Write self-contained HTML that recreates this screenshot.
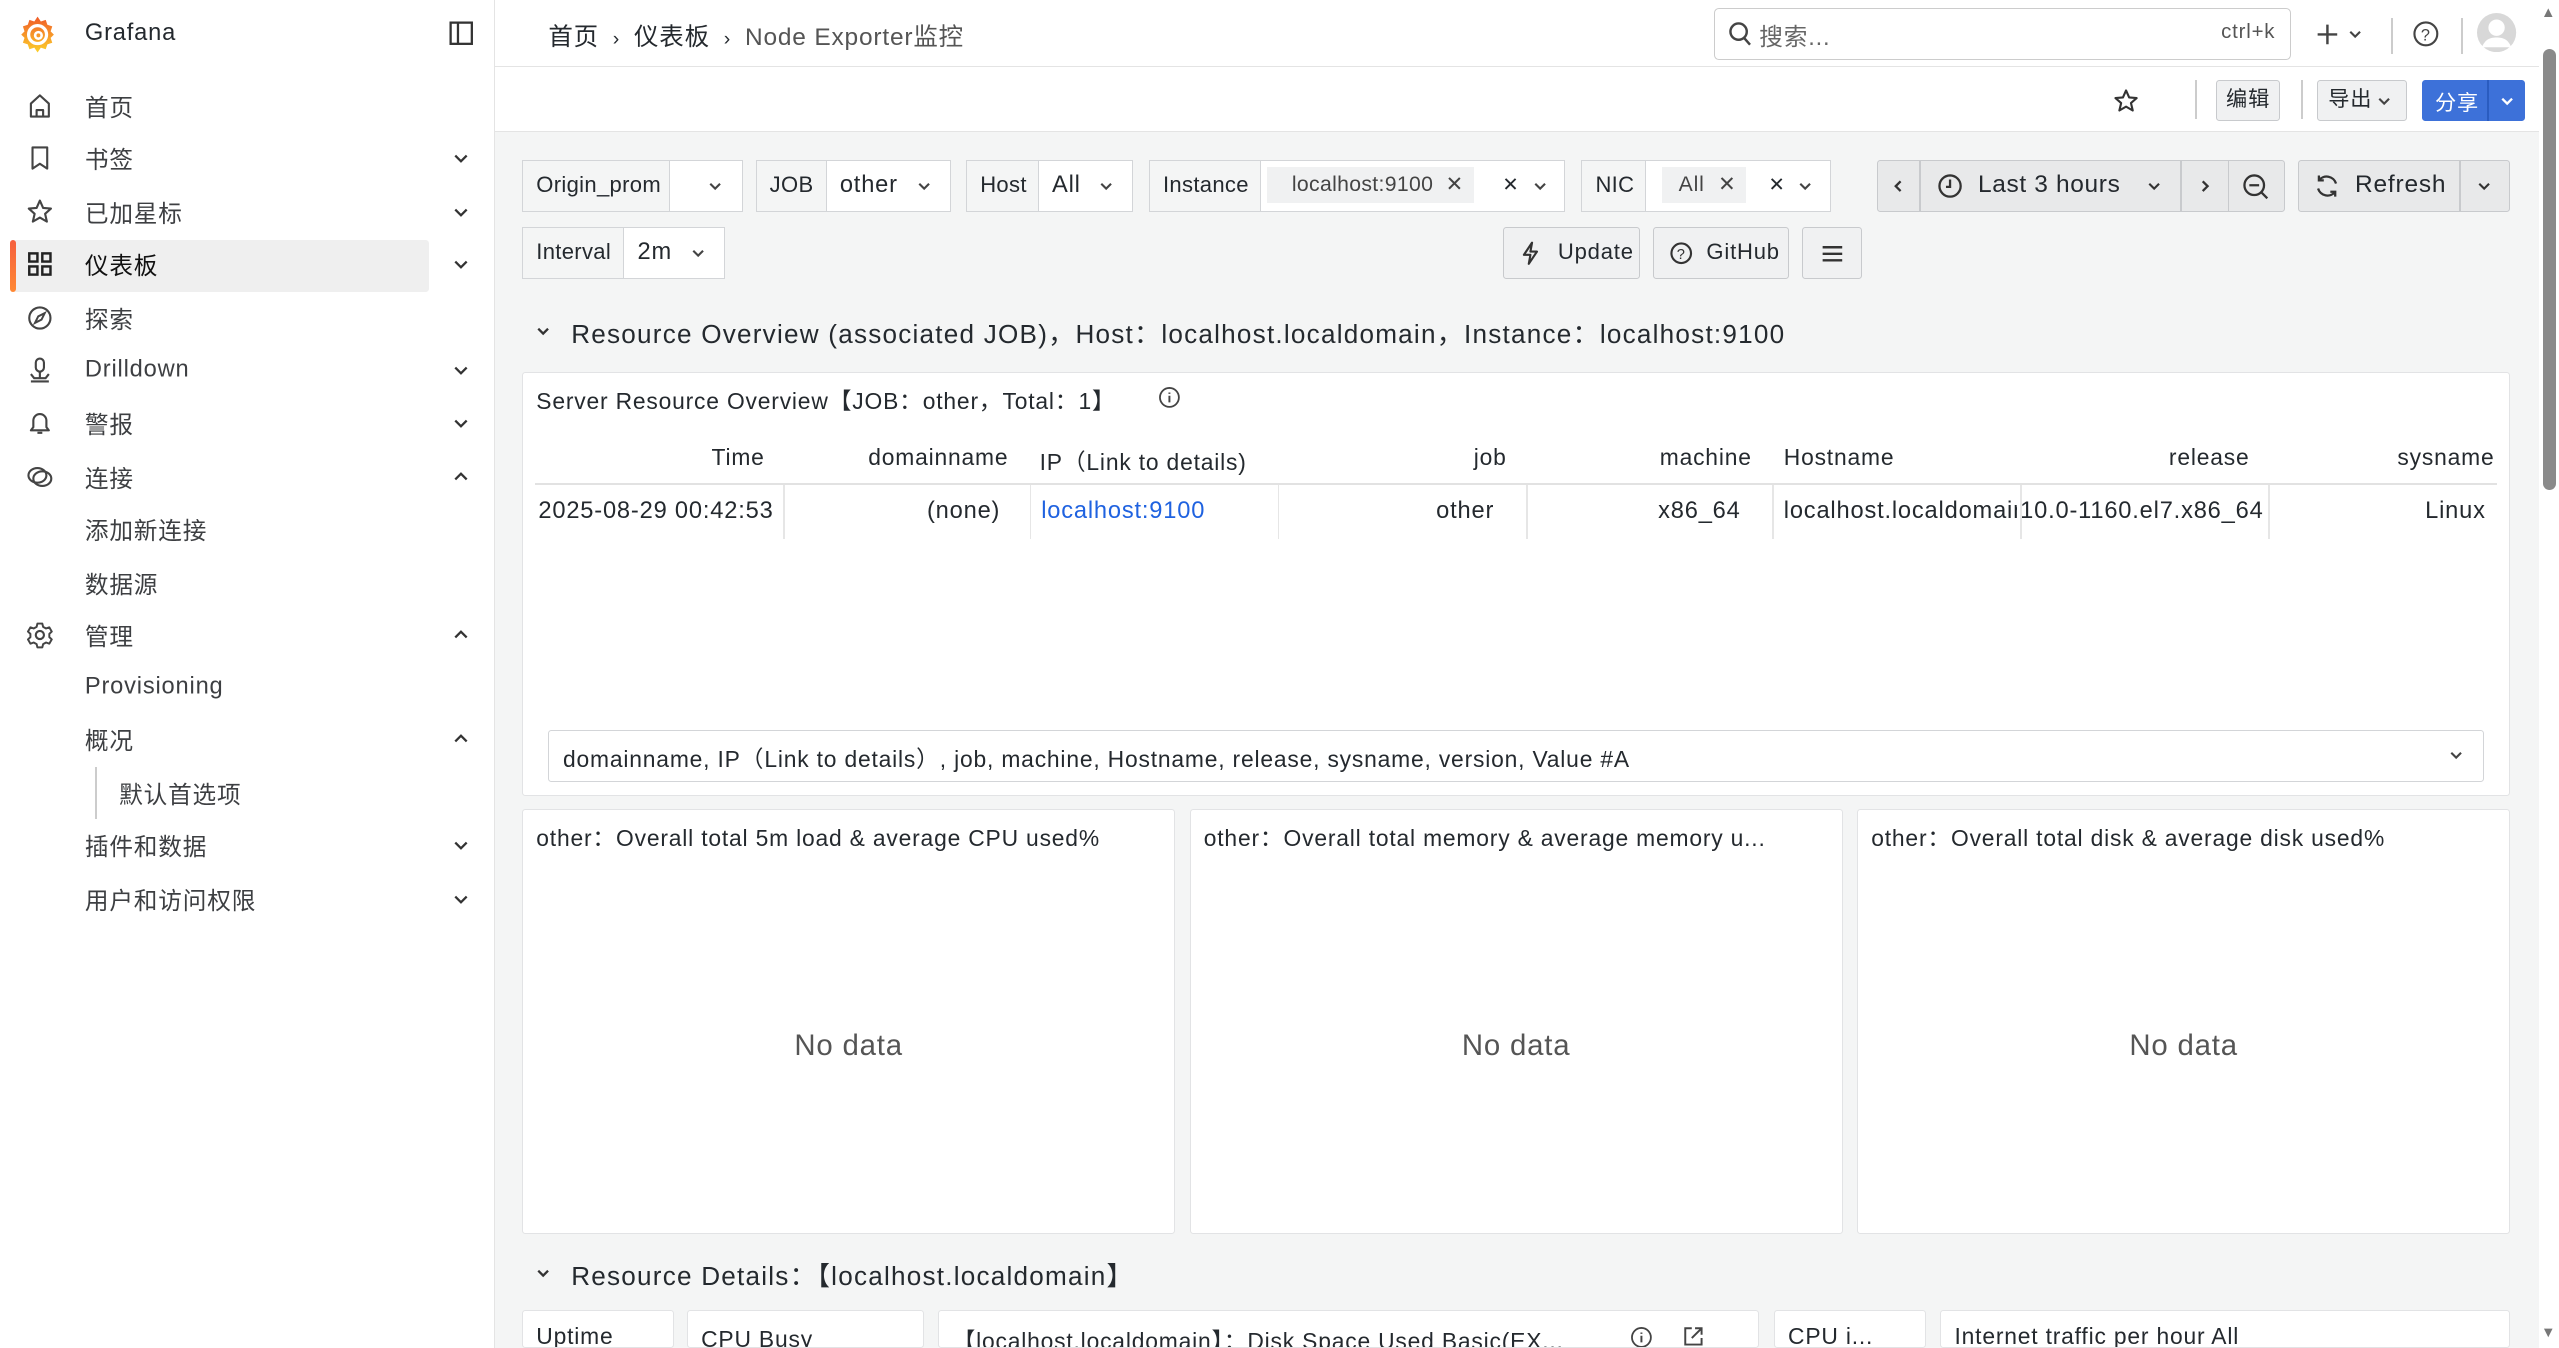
<!DOCTYPE html>
<html><head><meta charset="utf-8"><style>
html{margin:0;padding:0;background:#f4f5f5;overflow:hidden;}
body{margin:0;padding:0;width:1568px;height:826px;zoom:1.632;position:relative;overflow:hidden;background:#f4f5f5;font-family:"Liberation Sans","Noto Sans CJK SC",sans-serif;color:#24292e;font-size:14px;letter-spacing:0.5px;}
.a{position:absolute;white-space:nowrap;}
.box{position:absolute;box-sizing:border-box;}
.side{position:absolute;left:0;top:0;width:303px;height:826px;background:#fff;border-right:1px solid #e4e4e4;}
.nav{position:absolute;left:52px;font-size:14.5px;color:#3d3f42;transform:translateY(-50%);}
.ico{position:absolute;left:16px;width:17px;height:17px;transform:translateY(-50%);}
.chev{position:absolute;left:277px;width:11px;height:11px;transform:translateY(-50%);}
.lbl{position:absolute;box-sizing:border-box;height:32px;border:1px solid #d3d5d8;background:#f4f5f5;font-size:13.5px;line-height:30px;padding-left:8px;letter-spacing:0.2px;}
.inp{position:absolute;box-sizing:border-box;height:32px;border:1px solid #d3d5d8;background:#fff;font-size:14.5px;line-height:30px;padding-left:8px;}
.btn{position:absolute;box-sizing:border-box;height:32px;border:1px solid #c8cacd;background:#f0f1f2;font-size:13.5px;line-height:30px;border-radius:2px;}
.panel{position:absolute;box-sizing:border-box;background:#fff;border:1px solid #e2e3e5;border-radius:2px;overflow:hidden;}
.pt{position:absolute;left:8px;top:7px;font-size:14px;white-space:nowrap;}
.nd{position:absolute;left:0;right:0;top:134px;text-align:center;font-size:18px;color:#555;}
.th{position:absolute;top:272px;font-size:14px;white-space:nowrap;}
.td{position:absolute;top:305px;font-size:14.5px;white-space:nowrap;}
.clip{position:absolute;top:305px;height:20px;overflow:hidden;}
.clip span{position:absolute;right:0;top:0;font-size:14.5px;white-space:nowrap;}
.vl{position:absolute;top:297px;width:1px;height:33px;background:#e6e6e6;}
.dn{position:absolute;width:10px;height:10px;}
</style></head><body>

<div class="box" style="left:0;top:0;width:1556px;height:41px;background:#fff;border-bottom:1px solid #e4e4e4;"></div>
<div class="box" style="left:303px;top:41px;width:1253px;height:40px;background:#fff;border-bottom:1px solid #e4e4e4;"></div>
<div class="side"></div>

<svg class="a" style="left:11px;top:9px" width="24" height="24" viewBox="0 0 24 24"><defs><linearGradient id="g" x1="0" y1="1" x2="0" y2="0"><stop offset="0" stop-color="#fcd12a"/><stop offset="1" stop-color="#f05a28"/></linearGradient></defs><path d="M12 1l2 3 3-1 1 3 3 1-1 3 2 2-2 2 1 3-3 1-1 3-3-1-2 3-2-3-3 1-1-3-3-1 1-3-2-2 2-2-1-3 3-1 1-3 3 1z" fill="url(#g)"/><circle cx="12" cy="12" r="5.5" fill="none" stroke="#fff" stroke-width="2"/><circle cx="12.5" cy="12.5" r="2" fill="none" stroke="#fff" stroke-width="1.6"/></svg>
<div class="a" style="left:52px;top:12px;font-size:14.5px;">Grafana</div>
<svg class="a" style="left:275px;top:13px" width="15" height="15" viewBox="0 0 15 15"><rect x="1" y="1" width="13" height="13" fill="none" stroke="#333" stroke-width="1.4"/><line x1="5.5" y1="1" x2="5.5" y2="14" stroke="#333" stroke-width="1.4"/></svg>

<div class="a" style="left:336px;top:11px;font-size:15px;">首页 <span style="font-size:12px">&nbsp;›&nbsp;</span> 仪表板 <span style="font-size:12px">&nbsp;›&nbsp;</span> <span style="color:#555">Node Exporter监控</span></div>

<div class="box" style="left:1050px;top:5px;width:354px;height:32px;border:1px solid #ccc;border-radius:3px;background:#fff;"></div>
<svg class="a" style="left:1059px;top:13px" width="15" height="16" viewBox="0 0 15 16"><circle cx="6.5" cy="6.5" r="5" fill="none" stroke="#444" stroke-width="1.5"/><line x1="10" y1="10.5" x2="13.5" y2="14.5" stroke="#444" stroke-width="1.5"/></svg>
<div class="a" style="left:1078px;top:11px;font-size:14.5px;color:#666;">搜索...</div>
<div class="a" style="left:1361px;top:13px;font-size:12.5px;color:#555;">ctrl+k</div>
<svg class="a" style="left:1419px;top:14px" width="14" height="14" viewBox="0 0 14 14"><path d="M7 1v12M1 7h12" stroke="#444" stroke-width="1.5"/></svg>
<svg class="dn" style="left:1438px;top:16px" viewBox="0 0 10 10"><path d="M2 3.5l3 3 3-3" fill="none" stroke="#444" stroke-width="1.3"/></svg>
<div class="box" style="left:1465px;top:11px;width:1px;height:22px;background:#ccc;"></div>
<svg class="a" style="left:1478px;top:12px" width="17" height="17" viewBox="0 0 17 17"><circle cx="8.5" cy="8.5" r="7" fill="none" stroke="#444" stroke-width="1.3"/><text x="8.5" y="12.5" text-anchor="middle" font-size="10" font-family="Liberation Sans" fill="#444">?</text></svg>
<div class="box" style="left:1508px;top:11px;width:1px;height:22px;background:#ccc;"></div>
<svg class="a" style="left:1518px;top:8px" width="24" height="24" viewBox="0 0 24 24"><circle cx="12" cy="12" r="12" fill="#d8d8d8"/><circle cx="12" cy="9" r="5" fill="#fff"/><path d="M3 21c2-5 5-6 9-6s7 1 9 6" fill="#fff"/></svg>
<div class="box" style="left:1556px;top:0;width:12px;height:826px;background:#fff;"></div>
<div class="box" style="left:1558px;top:30px;width:8px;height:270px;background:#8a8a8a;border-radius:4px;"></div>
<div class="a" style="left:1557px;top:3px;font-size:9px;color:#777;">▲</div>
<div class="a" style="left:1557px;top:812px;font-size:9px;color:#777;">▼</div>

<svg class="a" style="left:1295px;top:54px" width="16" height="16" viewBox="0 0 16 16"><path d="M8 1.5l1.9 4.3 4.6.4-3.5 3 1.1 4.6L8 11.4l-4.1 2.4 1.1-4.6-3.5-3 4.6-.4z" fill="none" stroke="#333" stroke-width="1.3" stroke-linejoin="round"/></svg>
<div class="box" style="left:1345px;top:49px;width:1px;height:24px;background:#ccc;"></div>
<div class="btn" style="left:1358px;top:49px;width:39px;height:25px;line-height:23px;text-align:center;font-size:13px;">编辑</div>
<div class="box" style="left:1410px;top:49px;width:1px;height:24px;background:#ccc;"></div>
<div class="btn" style="left:1420px;top:49px;width:55px;height:25px;line-height:23px;padding-left:6px;font-size:13px;">导出</div>
<svg class="dn" style="left:1456px;top:57px" viewBox="0 0 10 10"><path d="M2 3.5l3 3 3-3" fill="none" stroke="#444" stroke-width="1.3"/></svg>
<div class="box" style="left:1484px;top:49px;width:63px;height:25px;background:#3d71d9;border-radius:2px;"></div>
<div class="a" style="left:1492px;top:53px;font-size:13px;color:#fff;">分享</div>
<div class="box" style="left:1524px;top:49px;width:1px;height:25px;background:#2a5cc0;"></div>
<svg class="dn" style="left:1531px;top:57px" viewBox="0 0 10 10"><path d="M2 3.5l3 3 3-3" fill="none" stroke="#fff" stroke-width="1.4"/></svg>

<!-- sidebar -->
<svg class="ico" style="top:65px" viewBox="0 0 17 17"><path d="M3 15V7l5.5-5L14 7v8z M6.5 15v-4h4v4" fill="none" stroke="#444" stroke-width="1.3" stroke-linejoin="round"/></svg>
<div class="nav" style="top:65px">首页</div>
<svg class="ico" style="top:97px" viewBox="0 0 17 17"><path d="M4 2h9v13l-4.5-3L4 15z" fill="none" stroke="#444" stroke-width="1.3" stroke-linejoin="round"/></svg>
<div class="nav" style="top:97px">书签</div>
<svg class="ico" style="top:130px" viewBox="0 0 17 17"><path d="M8.5 1.5l2 4.5 4.8.4-3.6 3.2 1.1 4.8-4.3-2.5-4.3 2.5 1.1-4.8-3.6-3.2 4.8-.4z" fill="none" stroke="#444" stroke-width="1.3" stroke-linejoin="round"/></svg>
<div class="nav" style="top:130px">已加星标</div>
<div class="box" style="left:8px;top:147px;width:255px;height:32px;background:#efefef;border-radius:2px;"></div>
<div class="box" style="left:6px;top:147px;width:4px;height:32px;background:linear-gradient(#f55f3e,#ff8833);border-radius:2px;"></div>
<svg class="ico" style="top:162px" viewBox="0 0 17 17"><g fill="none" stroke="#222" stroke-width="1.5"><rect x="2" y="2" width="5" height="5"/><rect x="10" y="2" width="5" height="5"/><rect x="2" y="10" width="5" height="5"/><rect x="10" y="10" width="5" height="5"/></g></svg>
<div class="nav" style="top:162px;color:#111">仪表板</div>
<svg class="ico" style="top:195px" viewBox="0 0 17 17"><circle cx="8.5" cy="8.5" r="6.5" fill="none" stroke="#444" stroke-width="1.3"/><path d="M11.5 5.5l-2 4-4 2 2-4z" fill="none" stroke="#444" stroke-width="1.2"/></svg>
<div class="nav" style="top:195px">探索</div>
<svg class="ico" style="top:227px" viewBox="0 0 17 17"><g fill="none" stroke="#444" stroke-width="1.3"><rect x="6" y="1.5" width="5" height="8" rx="2.5"/><path d="M8.5 9.5v4M3 11l2 2.5h7l2-2.5M3 15.5h11"/></g></svg>
<div class="nav" style="top:227px">Drilldown</div>
<svg class="ico" style="top:259px" viewBox="0 0 17 17"><path d="M3 13h11l-1.5-2V7a4 4 0 0 0-8 0v4z M7 14.5h3" fill="none" stroke="#444" stroke-width="1.3" stroke-linejoin="round"/></svg>
<div class="nav" style="top:259px">警报</div>
<svg class="ico" style="top:292px" viewBox="0 0 17 17"><g fill="none" stroke="#444" stroke-width="1.3"><ellipse cx="7" cy="7.5" rx="5.5" ry="4.5"/><ellipse cx="10" cy="9.5" rx="5.5" ry="4.5"/></g></svg>
<div class="nav" style="top:292px">连接</div>
<div class="nav" style="top:324px">添加新连接</div>
<div class="nav" style="top:357px">数据源</div>
<svg class="ico" style="top:389px" viewBox="0 0 17 17"><circle cx="8.5" cy="8.5" r="2.5" fill="none" stroke="#444" stroke-width="1.3"/><path d="M7 1.5h3l.5 2 1.8 1 2-.7 1.5 2.6-1.5 1.4v2l1.5 1.4-1.5 2.6-2-.7-1.8 1-.5 2H7l-.5-2-1.8-1-2 .7-1.5-2.6 1.5-1.4v-2L1.2 6.4l1.5-2.6 2 .7 1.8-1z" fill="none" stroke="#444" stroke-width="1.2" stroke-linejoin="round"/></svg>
<div class="nav" style="top:389px">管理</div>
<div class="nav" style="top:421px">Provisioning</div>
<div class="nav" style="top:453px">概况</div>
<div class="box" style="left:58px;top:470px;width:1.5px;height:32px;background:#ccc;"></div>
<div class="nav" style="top:486px;left:73px">默认首选项</div>
<div class="nav" style="top:518px">插件和数据</div>
<div class="nav" style="top:551px">用户和访问权限</div>
<svg class="chev" style="top:97px" viewBox="0 0 11 11"><path d="M2 4l3.5 3.5L9 4" fill="none" stroke="#333" stroke-width="1.4"/></svg>
<svg class="chev" style="top:130px" viewBox="0 0 11 11"><path d="M2 4l3.5 3.5L9 4" fill="none" stroke="#333" stroke-width="1.4"/></svg>
<svg class="chev" style="top:162px" viewBox="0 0 11 11"><path d="M2 4l3.5 3.5L9 4" fill="none" stroke="#333" stroke-width="1.4"/></svg>
<svg class="chev" style="top:227px" viewBox="0 0 11 11"><path d="M2 4l3.5 3.5L9 4" fill="none" stroke="#333" stroke-width="1.4"/></svg>
<svg class="chev" style="top:259px" viewBox="0 0 11 11"><path d="M2 4l3.5 3.5L9 4" fill="none" stroke="#333" stroke-width="1.4"/></svg>
<svg class="chev" style="top:292px" viewBox="0 0 11 11"><path d="M2 7l3.5-3.5L9 7" fill="none" stroke="#333" stroke-width="1.4"/></svg>
<svg class="chev" style="top:389px" viewBox="0 0 11 11"><path d="M2 7l3.5-3.5L9 7" fill="none" stroke="#333" stroke-width="1.4"/></svg>
<svg class="chev" style="top:453px" viewBox="0 0 11 11"><path d="M2 7l3.5-3.5L9 7" fill="none" stroke="#333" stroke-width="1.4"/></svg>
<svg class="chev" style="top:518px" viewBox="0 0 11 11"><path d="M2 4l3.5 3.5L9 4" fill="none" stroke="#333" stroke-width="1.4"/></svg>
<svg class="chev" style="top:551px" viewBox="0 0 11 11"><path d="M2 4l3.5 3.5L9 4" fill="none" stroke="#333" stroke-width="1.4"/></svg>

<!-- variables -->
<div class="lbl" style="left:320px;top:98px;width:91px;">Origin_prom</div>
<div class="inp" style="left:410px;top:98px;width:45px;"></div>
<svg class="dn" style="left:433px;top:109px" viewBox="0 0 10 10"><path d="M2 3.5l3 3 3-3" fill="none" stroke="#444" stroke-width="1.3"/></svg>
<div class="lbl" style="left:463px;top:98px;width:44px;">JOB</div>
<div class="inp" style="left:506px;top:98px;width:77px;">other</div>
<svg class="dn" style="left:561px;top:109px" viewBox="0 0 10 10"><path d="M2 3.5l3 3 3-3" fill="none" stroke="#444" stroke-width="1.3"/></svg>
<div class="lbl" style="left:592px;top:98px;width:45px;">Host</div>
<div class="inp" style="left:636px;top:98px;width:58px;">All</div>
<svg class="dn" style="left:673px;top:109px" viewBox="0 0 10 10"><path d="M2 3.5l3 3 3-3" fill="none" stroke="#444" stroke-width="1.3"/></svg>
<div class="lbl" style="left:704px;top:98px;width:69px;">Instance</div>
<div class="inp" style="left:772px;top:98px;width:187px;"><span class="a" style="left:4px;top:4px;height:22px;line-height:22px;background:#f0f1f2;padding:0 6px 0 15px;font-size:13px;color:#444;letter-spacing:0.2px">localhost:9100 &nbsp;✕</span><span class="a" style="left:148px;top:0;font-size:12px">✕</span></div>
<svg class="dn" style="left:939px;top:109px" viewBox="0 0 10 10"><path d="M2 3.5l3 3 3-3" fill="none" stroke="#444" stroke-width="1.3"/></svg>
<div class="lbl" style="left:969px;top:98px;width:40px;">NIC</div>
<div class="inp" style="left:1008px;top:98px;width:114px;"><span class="a" style="left:10px;top:4px;height:22px;line-height:22px;background:#f0f1f2;padding:0 6px 0 10px;font-size:13px;color:#444">All &nbsp;✕</span><span class="a" style="left:75px;top:0;font-size:12px">✕</span></div>
<svg class="dn" style="left:1101px;top:109px" viewBox="0 0 10 10"><path d="M2 3.5l3 3 3-3" fill="none" stroke="#444" stroke-width="1.3"/></svg>

<div class="btn" style="left:1150px;top:98px;width:250px;background:#e8e9ea;"></div>
<div class="box" style="left:1176px;top:98px;width:1px;height:32px;background:#c8cacd;"></div>
<div class="box" style="left:1336px;top:98px;width:1px;height:32px;background:#c8cacd;"></div>
<div class="box" style="left:1365px;top:98px;width:1px;height:32px;background:#c8cacd;"></div>
<svg class="dn" style="left:1158px;top:109px" viewBox="0 0 10 10"><path d="M6.5 2l-3 3 3 3" fill="none" stroke="#333" stroke-width="1.4"/></svg>
<svg class="a" style="left:1187px;top:106px" width="16" height="16" viewBox="0 0 16 16"><circle cx="8" cy="8" r="6.5" fill="none" stroke="#333" stroke-width="1.4"/><path d="M8 4v4.5H5.5" fill="none" stroke="#333" stroke-width="1.4"/></svg>
<div class="a" style="left:1212px;top:105px;font-size:15px;letter-spacing:0.4px">Last 3 hours</div>
<svg class="dn" style="left:1315px;top:109px" viewBox="0 0 10 10"><path d="M2 3.5l3 3 3-3" fill="none" stroke="#333" stroke-width="1.3"/></svg>
<svg class="dn" style="left:1346px;top:109px" viewBox="0 0 10 10"><path d="M3.5 2l3 3-3 3" fill="none" stroke="#333" stroke-width="1.4"/></svg>
<svg class="a" style="left:1374px;top:106px" width="17" height="17" viewBox="0 0 17 17"><circle cx="7.5" cy="7.5" r="6" fill="none" stroke="#333" stroke-width="1.4"/><path d="M4.5 7.5h6M12 12l3.5 3.5" stroke="#333" stroke-width="1.4"/></svg>
<div class="btn" style="left:1408px;top:98px;width:130px;background:#e8e9ea;"></div>
<div class="box" style="left:1507px;top:98px;width:1px;height:32px;background:#c8cacd;"></div>
<svg class="a" style="left:1418px;top:106px" width="16" height="16" viewBox="0 0 16 16"><path d="M13.5 6.5A6 6 0 0 0 3 4.5M2.5 9.5A6 6 0 0 0 13 11.5" fill="none" stroke="#333" stroke-width="1.4"/><path d="M3 1.5v3h3M13 14.5v-3h-3" fill="none" stroke="#333" stroke-width="1.4"/></svg>
<div class="a" style="left:1443px;top:105px;font-size:15px;">Refresh</div>
<svg class="dn" style="left:1517px;top:109px" viewBox="0 0 10 10"><path d="M2 3.5l3 3 3-3" fill="none" stroke="#333" stroke-width="1.3"/></svg>

<div class="lbl" style="left:320px;top:139px;width:63px;">Interval</div>
<div class="inp" style="left:382px;top:139px;width:62px;">2m</div>
<svg class="dn" style="left:423px;top:150px" viewBox="0 0 10 10"><path d="M2 3.5l3 3 3-3" fill="none" stroke="#444" stroke-width="1.3"/></svg>
<div class="btn" style="left:921px;top:139px;width:84px;"><svg class="a" style="left:9px;top:8px" width="14" height="15" viewBox="0 0 14 15"><path d="M8 1L3 8.5h4L6 14l5-7.5H7z" fill="none" stroke="#333" stroke-width="1.3" stroke-linejoin="round"/></svg><span class="a" style="left:33px;top:0">Update</span></div>
<div class="btn" style="left:1013px;top:139px;width:83px;"><svg class="a" style="left:9px;top:8px" width="15" height="15" viewBox="0 0 15 15"><circle cx="7.5" cy="7.5" r="6" fill="none" stroke="#333" stroke-width="1.3"/><text x="7.5" y="11" text-anchor="middle" font-size="9" font-family="Liberation Sans" fill="#333">?</text></svg><span class="a" style="left:32px;top:0">GitHub</span></div>
<div class="btn" style="left:1104px;top:139px;width:37px;"><svg class="a" style="left:11px;top:10px" width="14" height="12" viewBox="0 0 14 12"><path d="M1 2h12M1 6h12M1 10h12" stroke="#333" stroke-width="1.5"/></svg></div>

<!-- section 1 -->
<svg class="dn" style="left:328px;top:198px" viewBox="0 0 10 10"><path d="M2 3.5l3 3 3-3" fill="none" stroke="#333" stroke-width="1.4"/></svg>
<div class="a" style="left:350px;top:192px;font-size:16px;letter-spacing:0.75px;">Resource Overview (associated JOB)，Host：localhost.localdomain，Instance：localhost:9100</div>

<div class="panel" style="left:320px;top:228px;width:1218px;height:260px;">
<div class="pt" style="top:6px;">Server Resource Overview【JOB：other，Total：1】</div>
<svg class="a" style="left:389px;top:8px" width="14" height="14" viewBox="0 0 14 14"><circle cx="7" cy="7" r="5.8" fill="none" stroke="#444" stroke-width="1.1"/><path d="M7 6v4M7 4v.8" stroke="#444" stroke-width="1.2"/></svg>
</div>
<div class="th" style="left:436px;">Time</div>
<div class="th" style="left:532px;">domainname</div>
<div class="th" style="left:637px;">IP（Link to details)</div>
<div class="th" style="left:903px;">job</div>
<div class="th" style="left:1017px;">machine</div>
<div class="th" style="left:1093px;">Hostname</div>
<div class="th" style="left:1329px;">release</div>
<div class="th" style="left:1469px;">sysname</div>
<div class="box" style="left:328px;top:296px;width:1202px;height:1px;background:#e2e2e2;"></div>
<div class="clip" style="left:328px;width:146px;"><span>2025-08-29 00:42:53</span></div>
<div class="td" style="left:568px;">(none)</div>
<div class="td" style="left:638px;color:#1f62e0;">localhost:9100</div>
<div class="td" style="left:880px;">other</div>
<div class="td" style="left:1016px;">x86_64</div>
<div class="td" style="left:1093px;width:143px;overflow:hidden;">localhost.localdomain</div>
<div class="clip" style="left:1239px;width:148px;background:#fff;"><span>3.10.0-1160.el7.x86_64</span></div>
<div class="td" style="left:1486px;">Linux</div>
<div class="vl" style="left:480px"></div><div class="vl" style="left:631px"></div><div class="vl" style="left:783px"></div><div class="vl" style="left:935px"></div><div class="vl" style="left:1086px"></div><div class="vl" style="left:1238px"></div><div class="vl" style="left:1390px"></div>
<div class="box" style="left:336px;top:447px;width:1186px;height:32px;border:1px solid #d3d5d8;background:#fff;border-radius:2px;"></div>
<div class="a" style="left:345px;top:454px;font-size:14px;">domainname, IP（Link to details）, job, machine, Hostname, release, sysname, version, Value #A</div>
<svg class="dn" style="left:1500px;top:458px" viewBox="0 0 10 10"><path d="M2 3.5l3 3 3-3" fill="none" stroke="#444" stroke-width="1.3"/></svg>

<div class="panel" style="left:320px;top:496px;width:400px;height:260px;"><div class="pt" style="top:6px">other：Overall total 5m load &amp; average CPU used%</div><div class="nd">No data</div></div>
<div class="panel" style="left:729px;top:496px;width:400px;height:260px;"><div class="pt" style="top:6px">other：Overall total memory &amp; average memory u...</div><div class="nd">No data</div></div>
<div class="panel" style="left:1138px;top:496px;width:400px;height:260px;"><div class="pt" style="top:6px">other：Overall total disk &amp; average disk used%</div><div class="nd">No data</div></div>

<!-- section 2 -->
<svg class="dn" style="left:328px;top:775px" viewBox="0 0 10 10"><path d="M2 3.5l3 3 3-3" fill="none" stroke="#333" stroke-width="1.4"/></svg>
<div class="a" style="left:350px;top:769px;font-size:16px;letter-spacing:0.75px;">Resource Details：【localhost.localdomain】</div>
<div class="panel" style="left:320px;top:803px;width:93px;height:23px;"><div class="pt">Uptime</div></div>
<div class="panel" style="left:421px;top:803px;width:145px;height:23px;"><div class="pt" style="top:9px">CPU Busy</div></div>
<div class="panel" style="left:575px;top:803px;width:503px;height:23px;"><div class="pt">【localhost.localdomain】：Disk Space Used Basic(EX...</div>
<svg class="a" style="left:423px;top:9px" width="14" height="14" viewBox="0 0 14 14"><circle cx="7" cy="7" r="5.8" fill="none" stroke="#444" stroke-width="1.1"/><path d="M7 6v4M7 4v.8" stroke="#444" stroke-width="1.2"/></svg>
<svg class="a" style="left:455px;top:8px" width="14" height="14" viewBox="0 0 14 14"><path d="M6 2H2v10h10V8M8 2h4v4M12 2L6 8" fill="none" stroke="#444" stroke-width="1.2"/></svg></div>
<div class="panel" style="left:1087px;top:803px;width:93px;height:23px;"><div class="pt">CPU i...</div></div>
<div class="panel" style="left:1189px;top:803px;width:349px;height:23px;"><div class="pt">Internet traffic per hour All</div></div>
</body></html>
